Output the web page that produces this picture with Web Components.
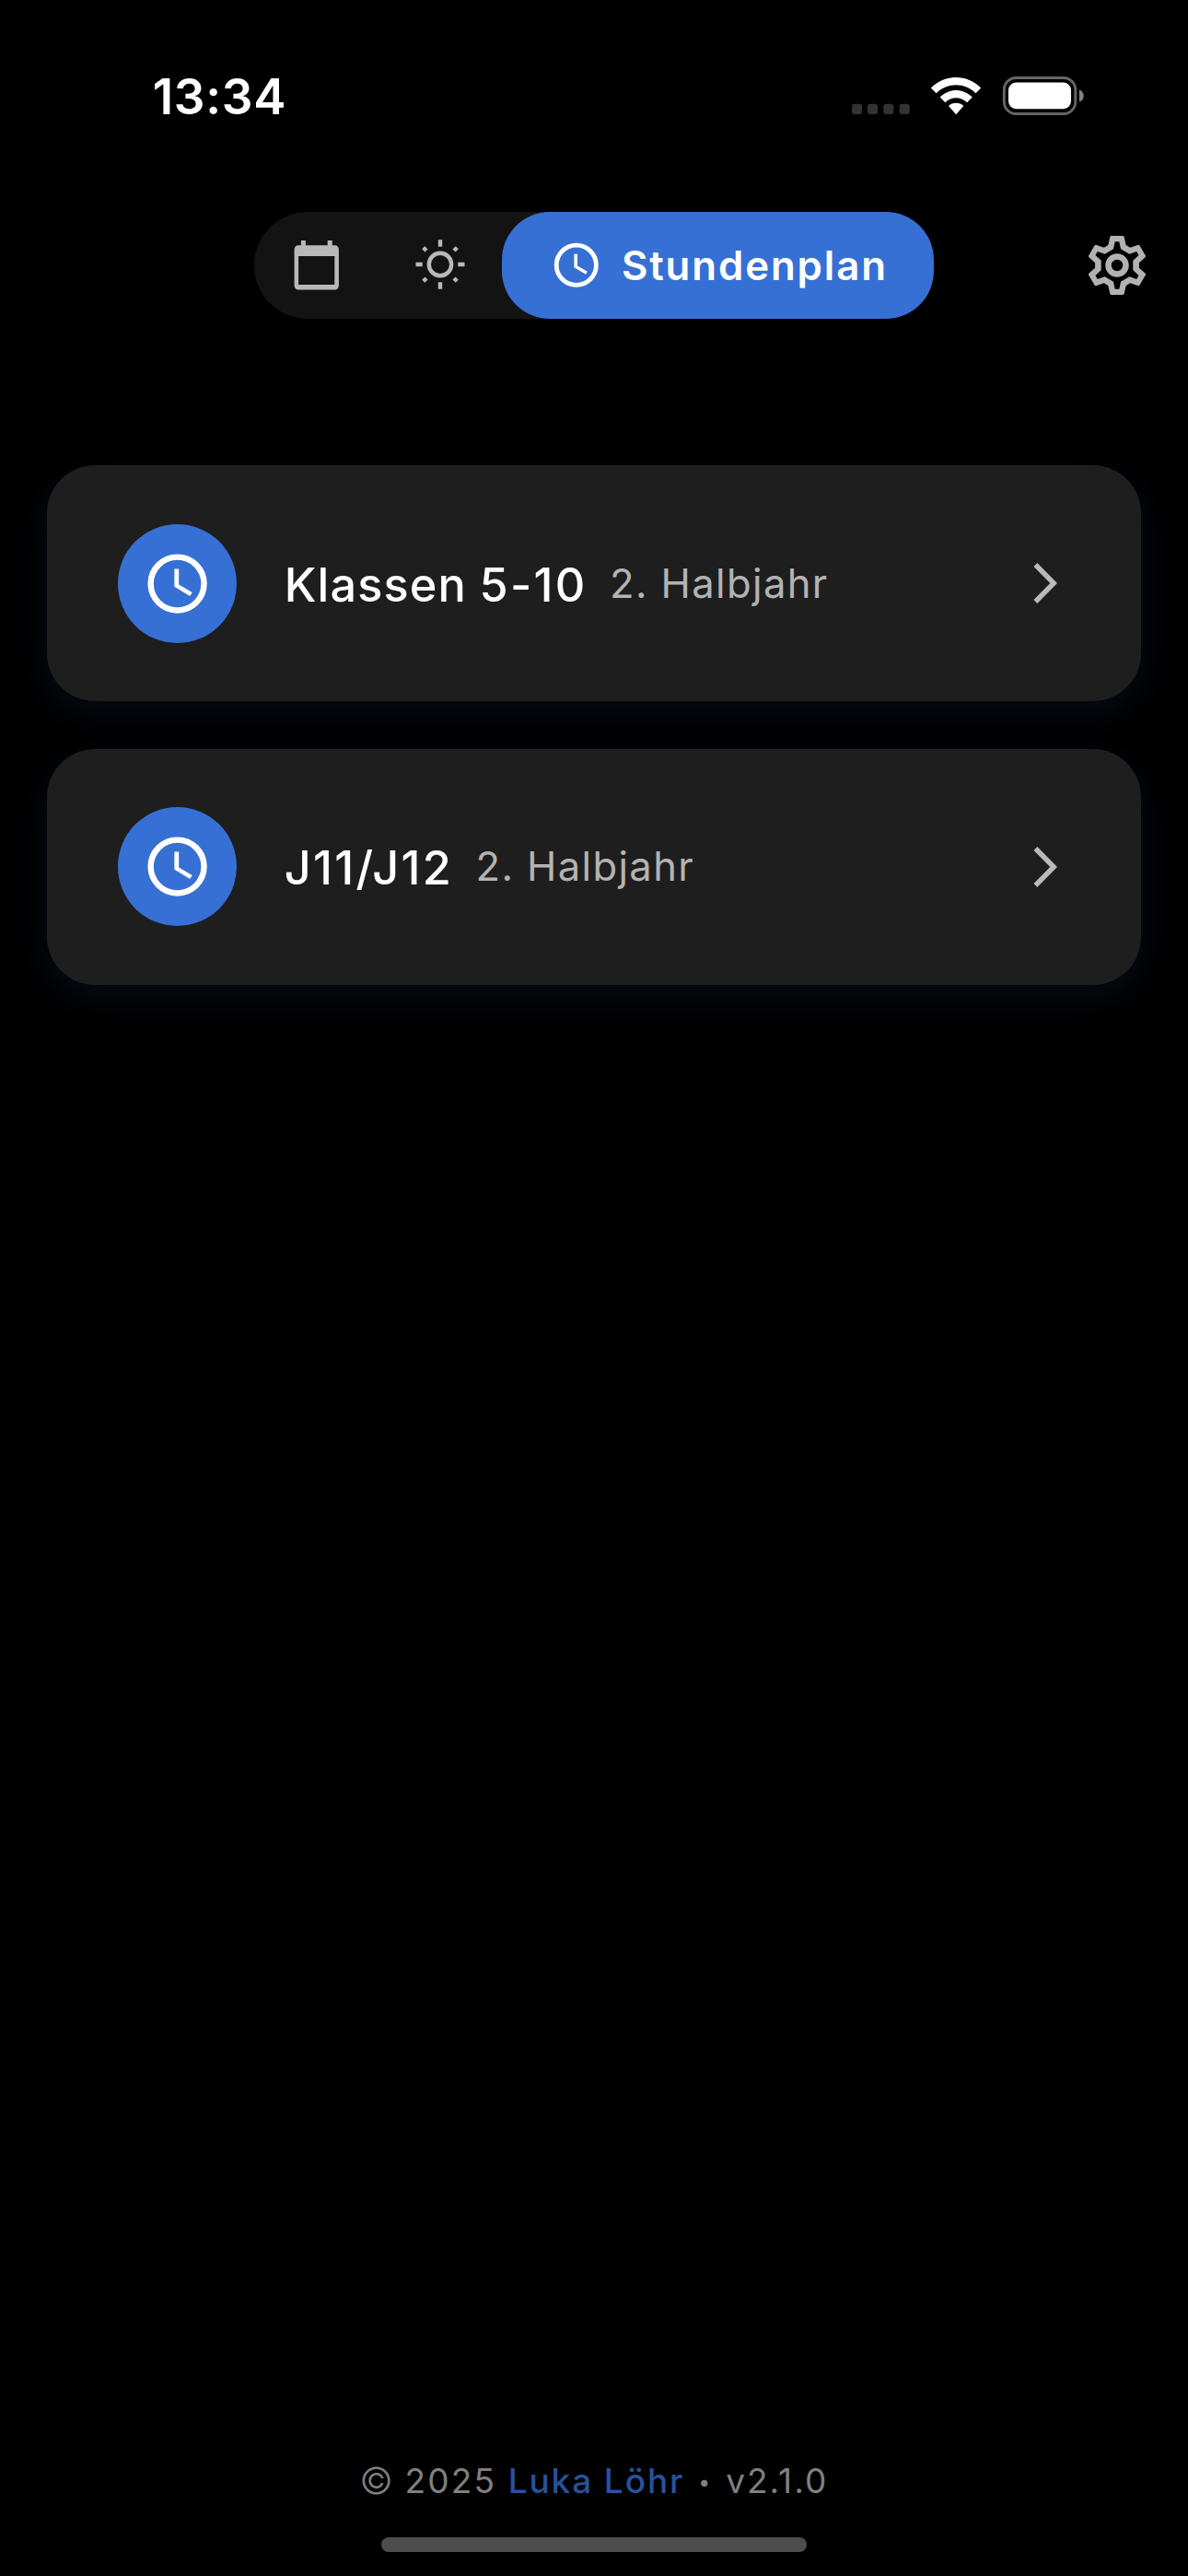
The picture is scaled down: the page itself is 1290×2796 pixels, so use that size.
<!DOCTYPE html>
<html lang="de">
<head>
<meta charset="utf-8">
<title>Stundenplan</title>
<style>
html,body{margin:0;background:#000;height:100%}
body{font-family:Inter,"Liberation Sans",sans-serif;color:#fff}
</style>
</head>
<body>
<plan-app>
  <status-bar>13:34</status-bar>
  <top-nav></top-nav>
  <plan-list>
    <plan-card><span>Klassen <span style="letter-spacing:2.35px">5-10</span></span><span slot="sub">2. Halbjahr</span></plan-card>
    <plan-card><span style="letter-spacing:2.3px">J11/J12</span><span slot="sub">2. Halbjahr</span></plan-card>
  </plan-list>
  <app-footer></app-footer>
  <home-bar></home-bar>
</plan-app>
<script>
const define = (name, html) => customElements.define(name, class extends HTMLElement {
  constructor() {
    super();
    const t = document.createElement('template');
    t.innerHTML = html;
    this.attachShadow({mode: 'open'}).appendChild(t.content.cloneNode(true));
  }
});

define('plan-app', `<style>
:host{display:flex;flex-direction:column;width:1290px;height:2796px;background:#000;overflow:hidden}
</style><slot></slot>`);

define('status-bar', `<style>
:host{display:flex;flex:none;box-sizing:border-box;height:208.6px;padding:0 112.5px 0 165.7px;align-items:center;
  font-size:53px;font-weight:600;line-height:64px;letter-spacing:.7px}
span{padding-top:1px}
.icons{margin-left:auto;display:flex}
svg{display:block}
</style><span><slot></slot></span>
<div class="icons"><svg width="254" height="48" viewBox="924 80 254 48">
<g fill="#333"><rect x="925" y="112.7" width="11" height="11.3" rx="3"/><rect x="942" y="112.7" width="11" height="11.3" rx="3"/><rect x="959.3" y="112.7" width="11" height="11.3" rx="3"/><rect x="976.7" y="112.7" width="11" height="11.3" rx="3"/></g>
<g fill="#fff">
<path d="M1010.9 95.6C1026 80.2 1050.4 80.2 1065.2 95.6L1059.5 101.2C1047.6 89.4 1028.7 89.4 1016.7 101.2Z"/>
<path d="M1020.7 105.5C1030.6 95.4 1045.8 95.4 1055.8 105.5L1050 111.3C1043.2 104.6 1033.2 104.6 1026.3 111.3Z"/>
<path d="M1030 115C1034.5 110.6 1041.8 110.6 1046.3 115L1038.2 124.2Z"/>
</g>
<rect x="1090.3" y="84.5" width="77.5" height="39" rx="13" fill="none" stroke="#666" stroke-width="2.9"/>
<rect x="1095" y="89.6" width="68" height="28.6" rx="8.5" fill="#fff"/>
<path d="M1172 97.3C1178.3 99.8 1178.3 108.2 1172 110.7Z" fill="#808080"/>
</svg></div>`);

define('plan-icon-clock', `<style>:host{display:block;flex:none}svg{display:block;width:100%;height:100%}</style>
<svg viewBox="0 0 24 24" fill="#fff"><circle cx="12" cy="12" r="9" fill="none" stroke="#fff" stroke-width="2"/><path d="M12.5 7H11v6l5.25 3.15.75-1.23-4.5-2.67z"/></svg>`);

define('top-nav', `<style>
:host{display:grid;flex:none;grid-template-columns:1fr auto 1fr;align-items:center;height:115.4px;margin-top:21.6px}
.seg{display:flex;grid-column:2;width:737.4px;height:115.4px;border-radius:57.7px;background:#131313}
.tab{width:134.6px;display:flex;align-items:center;justify-content:center}
.tab svg{display:block}
.active{flex:1;display:flex;box-sizing:border-box;align-items:center;padding-left:51.5px;gap:20.3px;border-radius:52px;background:#3770d4;
  font-size:43.8px;font-weight:600;line-height:54px;letter-spacing:1.88px}
.active span{padding-top:1.6px}
.active plan-icon-clock{width:57.6px;height:57.6px}
.gear{justify-self:end;margin-right:44px}
.gear svg{display:block}
</style>
<div class="seg">
  <div class="tab"><svg width="60" height="60" viewBox="314.1 258.3 60 60" fill="#b8b8b8"><path d="M327 261.2h5v5.3h23.8v-5.3h5v5.3h2.9a4.3 4.3 0 0 1 4.3 4.3v39.6a4.3 4.3 0 0 1-4.3 4.3h-39.7a4.3 4.3 0 0 1-4.3-4.3v-39.6a4.3 4.3 0 0 1 4.3-4.3h3zM324.2 278.2v31h39.2v-31z" fill-rule="evenodd"/></svg></div>
  <div class="tab"><svg width="60" height="60" viewBox="-30 -29 60 60" fill="none" stroke="#b8b8b8" stroke-width="4.4"><circle r="12.2"/><path d="M0-26.7V-19.2M0 26.7V19.2M-26.5 0H-19.3M26.5 0H19.3M-18.3-18.3L-15-15M18.3-18.3L15-15M-18.3 18.3L-15 15M18.3 18.3L15 15"/></svg></div>
  <div class="active"><plan-icon-clock></plan-icon-clock><span>Stundenplan</span></div>
</div>
<div class="gear"><svg width="66" height="66" viewBox="-99 -99 198 198" fill="#b2b2b2" fill-rule="evenodd"><path class="g"/><circle r="28.5" fill="none" stroke="#b2b2b2" stroke-width="19.5"/></svg></div>`);

// Outline of the six-toothed gear: one tooth profile turned in 60 degree steps.
const ringOfTeeth = pts => {
  const out = [];
  for (let i = 0; i < 6; i++) {
    const a = i * Math.PI / 3, c = Math.cos(a), s = Math.sin(a);
    for (const [x, y] of pts) out.push((x * c - y * s).toFixed(1) + ' ' + (x * s + y * c).toFixed(1));
  }
  return 'M' + out.join('L') + 'Z';
};
for (const nav of document.querySelectorAll('top-nav'))
  nav.shadowRoot.querySelector('.g').setAttribute('d',
    ringOfTeeth([[-29, -66], [-23, -93], [-20, -96], [20, -96], [23, -93], [29, -66]]) +
    ringOfTeeth([[-12, -53], [-7, -77.5], [7, -77.5], [12, -53]]));

define('plan-list', `<style>
:host{display:flex;flex-direction:column;gap:51.6px;padding:159.8px 51.4px 0}
</style><slot></slot>`);

define('plan-card', `<style>
:host{display:flex;align-items:center;box-sizing:border-box;height:255.8px;padding:0 87.5px 0 77px;border-radius:52px;background:#1e1e1e;
  box-shadow:0 13px 39px rgba(55,112,212,.1)}
.dot{width:128.8px;height:128.8px;border-radius:50%;background:#3770d4;display:flex;align-items:center;justify-content:center;flex:none}
.dot plan-icon-clock{width:77.2px;height:77.2px}
.txt{display:flex;align-items:center;gap:24.4px;margin-left:51.6px;white-space:nowrap}
.title{font-size:50.4px;font-weight:500;line-height:64px;letter-spacing:1.13px;word-spacing:-1px;padding-top:3px}
.sub{font-size:43.6px;line-height:54px;letter-spacing:1.34px;color:#b3b3b3;padding-top:1.4px}
svg{display:block;margin-left:auto}
</style>
<div class="dot"><plan-icon-clock></plan-icon-clock></div>
<div class="txt"><span class="title"><slot></slot></span><span class="sub"><slot name="sub"></slot></span></div>
<svg width="34" height="48" viewBox="-3 -24 34 48" fill="none" stroke="#bababa" stroke-width="5.4" stroke-linecap="butt"><path d="M4.4-20L24.2 0 4.4 20"/></svg>`);

define('app-footer', `<style>
:host{display:flex;flex:none;margin-top:auto;height:48px;align-items:center;padding-left:390.2px;font-size:37px;line-height:48px;color:#808080;white-space:nowrap}
.c{font-size:40px;font-weight:300}
.y{margin-left:12.8px;letter-spacing:2.18px}
.a{margin-left:12.4px;letter-spacing:1.9px;font-weight:500;color:#27529b}
.b{margin-left:15px;font-size:23px;padding-top:2px}
.v{margin-left:16.9px;letter-spacing:2.04px}
</style><span class="c">©</span><span class="y">2025</span><span class="a">Luka Löhr</span><span class="b">•</span><span class="v">v2.1.0</span>`);

define('home-bar', `<style>
:host{display:block;flex:none;width:462px;height:16px;margin:37.5px auto 26px;border-radius:8px;background:#4d4d4d}
</style>`);
</script>
</body>
</html>
